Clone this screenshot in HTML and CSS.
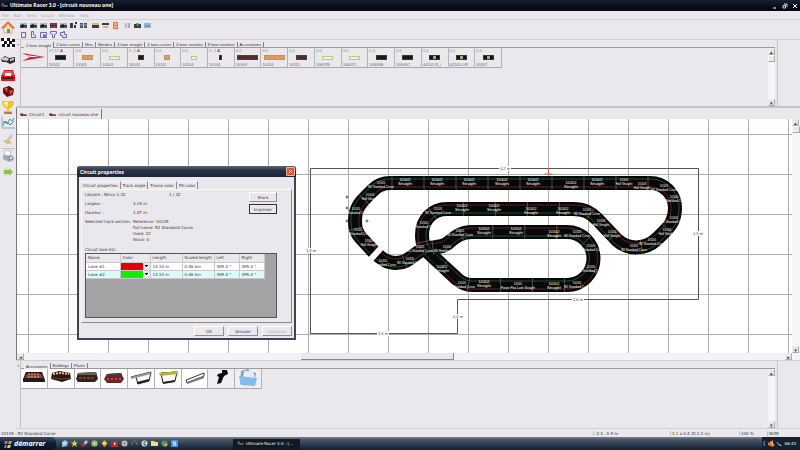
FILE: index.html
```html
<!DOCTYPE html>
<html lang="en">
<head>
<meta charset="utf-8">
<title>Ultimate Racer 3.0 - [circuit nouveau one]</title>
<link rel="stylesheet" href="styles.css">
<script src="track.js" defer></script>
</head>
<body>
<svg class="defs" aria-hidden="true">
  <symbol id="car" viewBox="0 0 12 7"><path d="M0 2 4 1 6 3 11 3 12 6 2 6 0 4Z" fill="#444"/><path d="M1 1h4" stroke="#ddd"/><path d="M5 4h6" stroke="#c55" stroke-width="2"/></symbol>
  <symbol id="pic" viewBox="0 0 7 7"><path d="M0 1h7v5H0z" fill="#3d4856"/><path d="M0 1h7v2H0z" fill="#a9b9bf"/><path d="M1 3l2-1 2 2 1-1v2H1z" fill="#161b23"/><path d="M4 5h2" stroke="#56985e"/></symbol>
  <symbol id="folder" viewBox="0 0 20 18"><path d="M3 2 10 0 12 2 18 4 16 16 2 15Z" fill="#83a2bc"/><path d="M6 2h9l2 7H5z" fill="#e2edf5"/><path d="M1 7 19 9 17 17 3 16Z" fill="#86bce8"/></symbol>
</svg>
<header class="title"><svg class="title-car"><use href="#car"/></svg><h1>Ultimate Racer 3.0 - [circuit nouveau one]</h1>
  <button aria-label="Minimize"><svg viewBox="0 0 6 6"><path d="M1 5h3" stroke="#fff"/></svg></button>
  <button aria-label="Restore"><svg viewBox="0 0 6 6"><path d="M2 1h3v3M1 2.500h2.500v2.500H1z" fill="none" stroke="#ddd"/></svg></button>
  <button aria-label="Close"><svg viewBox="0 0 6 6"><path d="m1 1 4 4m0-4-4 4" stroke="#fff"/></svg></button>
</header>
<nav class="menu"><button>File</button><button>Edit</button><button>View</button><button>Circuit</button><button>Window</button><button>Help</button></nav>
<div class="app">
  <aside class="side">
    <button aria-label="Home"><svg viewBox="0 0 14 14"><path d="M3 7h8v6H3z" fill="#f5ead8" stroke="#c9b49a"/><path d="M0 8 7 1l7 7-2 1-5-5-5 5z" fill="#e8742a"/><path d="M6 9h3v4H6z" fill="#b57436"/></svg></button>
    <button aria-label="Race"><svg viewBox="0 0 14 14"><path d="M0 2q4-2 7 0t6 1l1 8q-4 2-7 0t-6 0z" fill="#fff"/><path d="M0 2h3v3H0zM6 2h3v3H6zM11 3h3v3h-3zM3 5h3v3H3zM8 5h3v3H8zM1 8h3v3H1zM6 8h3v3H6zM11 8h3v3h-3z" fill="#161616"/></svg></button>
    <button aria-label="Cars"><svg viewBox="0 0 14 14"><path d="m0 7 4-3 4 2 6-1v5l-5 2-4-2H1z" fill="#303030"/><path d="m1 6 4-1 3 2-2 2-5-1zM9 7l4-1v2l-4 1z" fill="#ccc"/></svg></button>
    <button aria-label="Phone"><svg viewBox="0 0 14 14"><path d="m3 2 9 0 2 6v5H0V8z" fill="#d41c23"/><path d="m3 3 8 0 2 4H1z" fill="#ef5b5b"/><path d="M4 5h6v3H4z" fill="#fff"/><path d="M1 10h12" stroke="#651016" stroke-width="2"/></svg></button>
    <button aria-label="Drivers"><svg viewBox="0 0 14 14"><path d="m2 4 6-2 5 3-1 6-6 2-4-4z" fill="#79120f"/><path d="m3 4 4 0-1 4zM8 7l4-1-2 5z" fill="#f0442e"/><path d="m7 2 4 2-3 2zM4 10l3-1 0 3z" fill="#222"/></svg></button>
    <button aria-label="Trophies"><svg viewBox="0 0 14 14"><path d="M1 1h12q0 6-5 8v2h3v3H3v-3h3V9Q1 7 1 1" fill="#efc526"/><path d="M3 2h4v5Q3 6 3 2" fill="#fff19b"/><path d="M3 12h8v2H3z" fill="#ae8439"/></svg></button>
    <button aria-label="Statistics"><svg viewBox="0 0 14 14"><path d="M1 1v11h13" fill="none" stroke="#7dafc5"/><path d="m2 10 2-5 2 3 3-5 2 2 2-3M2 6l4 0 3 3 4-4" fill="none" stroke="#3b91a9"/></svg></button>
    <button aria-label="Tools"><svg viewBox="0 0 14 14"><path d="m2 9 5-2 4 4-5 1z" fill="#d7c067"/><path d="m5 9 5-7 2 2-5 6z" fill="#c9c4b3"/></svg></button>
    <button class="split" aria-label="Print"><svg viewBox="0 0 14 14"><path d="m4 1 6 1-1 5-6-1z" fill="#fff" stroke="#b6bec7"/><path d="m2 6 9 1 2 4-5 2-6-3z" fill="#a0aab5"/><circle cx="10" cy="9" r="2" fill="#dde6ed" stroke="#738191"/></svg></button>
    <button aria-label="Exit"><svg viewBox="0 0 14 14"><path d="M2 3h5v8H2z" fill="#dbe6c4"/><path d="M3 5h5V3l4 4-4 4V9H3z" fill="#8dc63e"/></svg></button>
  </aside>
  <main class="work">
    <div class="tools">
      <button aria-label="New"><svg><use href="#pic"/></svg></button><button aria-label="Open"><svg><use href="#pic"/></svg></button><button aria-label="Save"><svg><use href="#pic"/></svg></button>
      <button aria-label="Delete"><svg viewBox="0 0 7 7"><path d="M0 1h7v5H0z" fill="#48303a"/><path d="M1 2h5M1 5h5" stroke="#df3940"/></svg></button>
      <button aria-label="Copy"><svg><use href="#pic"/></svg></button><button aria-label="Align"><svg viewBox="0 0 7 7"><path d="M0 1h3v5H0zM4 3h2v3H4zM5 0h2v2H5z" fill="#343c48"/></svg></button><button aria-label="Distribute"><svg viewBox="0 0 7 7"><path d="M0 1h3v5H0zM4 1h3v5H4z" fill="#465060"/><path d="M0 3h7" stroke="#9eaebb"/></svg></button>
      <button class="gap" aria-label="Layer"><svg viewBox="0 0 7 7"><path d="M0 1h7v2H0z" fill="#dfba68"/><path d="M0 3h7v3H0z" fill="#393e3d"/></svg></button><button aria-label="Bring forward"><svg viewBox="0 0 7 7"><path d="M0 1h7v2H0z" fill="#393e3d"/><path d="M1 4h5v2H1z" fill="#e5ae65"/></svg></button><button aria-label="Selection"><svg viewBox="0 0 7 7"><path d="M1 0h5v7H1z" fill="#e37651"/><path d="M2 2h3M2 5h3" stroke="#fff2d9"/></svg></button>
      <button class="gap" aria-label="Properties"><svg viewBox="0 0 7 7"><path d="M1 1h5v5H1z" fill="#a3b1b4"/><path d="M3 1v5" stroke="#fff"/></svg></button><button aria-label="Photo"><svg viewBox="0 0 7 7"><path d="M0 2h7v4H0z" fill="#2d4937"/><path d="M2 1h3l-1 4z" fill="#62a168"/></svg></button><button aria-label="Preview"><svg viewBox="0 0 7 7"><path d="M0 1h7v5H0z" fill="#8cb8e4"/><path d="M1 4h5" stroke="#4f77a8"/></svg></button>
    </div>
    <div class="tools outline">
      <button aria-label="Rectangle"><svg viewBox="0 0 7 7"><path d="M1.500 1.500h4v5h-4z"/></svg></button><button aria-label="L room"><svg viewBox="0 0 7 7"><path d="M1.500.5h2v3l2 1v2h-4z"/></svg></button><button aria-label="U room"><svg viewBox="0 0 7 7"><path d="M.5 1.500h6v3h-2v-1h-1v2h3v1h-6z"/></svg></button><button aria-label="T room"><svg viewBox="0 0 7 7"><path d="M.5.5h6v2l-2 1v3h-2v-3l-2-1z"/></svg></button><button aria-label="Free room"><svg viewBox="0 0 7 7"><path d="M.5 1.500h3v-1h1v3h2v3h-4v-2h-2z"/></svg></button>
    </div>
    <section class="tray">
      <span class="grip">×</span>
      <div class="tray-main">
        <div class="tabs"><button class="on">2 lane straight</button><button>2 lane curves</button><button>Misc</button><button>Borders</button><button>4 lane straight</button><button>4 lane curves</button><button>6 lane sections</button><button>8 lane sections</button><button>Accessories</button></div>
        <div class="tray-body">
          <div class="parts">
            <button aria-label="Straight"><svg viewBox="0 0 24 10"><path d="M0 1 23 5 0 9 8 5z" fill="#cc2433"/><path d="m3 3 15 2H9z" fill="#fff"/></svg></button>
            <button><small>17-17 <b>A</b></small><i class="s w10"></i><span>10102</span></button>
            <button><small>0-0</small><i class="s w10 tan"></i><span>10103</span></button>
            <button><small>0-0</small><i class="s w10 pale"></i><span>10101</span></button>
            <button><small>5--5 <b>A</b></small><i class="s w5"></i><span>10103</span></button>
            <button><small>0-0</small><i class="s w5 tan"></i><span>10111</span></button>
            <button><small>0-0</small><i class="s w5 pale"></i><span>10104</span></button>
            <button><small>2--2 <b>A</b></small><i class="s w3"></i><span>10104</span></button>
            <button><small>0-0</small><i class="s w20 lanes"></i><span>10109</span></button>
            <button><small>0-0</small><i class="s w20 tan"></i><span>10114</span></button>
            <button><small>0-0</small><i class="s w10 lanes"></i><span>10111</span></button>
            <button><small>0-0</small><i class="s w10 pale"></i><span>10607B</span></button>
            <button><small>0-0</small><i class="s w10 pale"></i><span>10607C</span></button>
            <button><small>0-0</small><i class="s w10"></i><span>10606B</span></button>
            <button><small>0-0</small><i class="s w10"></i><span>10606C</span></button>
            <button><small>0-0</small><i class="s w10 mark"></i><span>40201-R_/</span></button>
            <button><small>0-0</small><i class="s w10 mark"></i><span>40201-L/R</span></button>
            <button><small>0-0</small><i class="s w10 mark"></i><span>40207</span></button>
          </div>
          <div class="vscroll"><button aria-label="Up">▴</button><div class="thumb"></div><button aria-label="Down">▾</button></div>
        </div>
      </div>
    </section>
    <div class="docs"><button><svg><use href="#car"/></svg>Circuit1</button><button class="on"><svg><use href="#car"/></svg>circuit nouveau one</button></div>
    <section class="canvas">
      <svg class="plan" role="img" aria-label="Circuit plan">
        <defs><pattern id="grid" x="11" y="15" width="40" height="40" patternUnits="userSpaceOnUse"><path d="M.5 0v40M0 .5h40" stroke="#adadad"/></pattern></defs>
        <rect width="100%" height="100%" fill="url(#grid)"/>
        <g id="plan" transform="translate(-17 -119)">
          <path d="M310.500 168.500h388v131h-241v34h-147z" fill="none" stroke="#555"/>
          <path id="road" class="road" d="M390 183H650C664 183 675 194 675 208C675 220 670 226 664 232L657 239C645 250 628 250 617 240L597 219C590 212 584 209 573 209H447C432 209 422 220 422 235C422 245 425 249 430 254L457 279Q464 285 472 285H567A26.500 26.500 0 0 0 567 232H472C460 232 454 238 448 243C441 249 430 246 422 250C412 255 408 263 396 263C387 263 382 259 374 252L362 239C355 232 355 226 355 220C355 209 360 203 366 197L373 190Q380 183 390 183"/>
          <path id="green" class="lane green"/><path id="red" class="lane red"/>
          <path id="gap" d="m371 259 10-11" stroke="#fff" stroke-width="6"/>
          <path d="M548.500 168v7m-4-1h8" stroke="#c66"/>
          <g fill="#fff" stroke="#555"><circle cx="347" cy="197" r="1"/><circle cx="347" cy="208" r="1"/><circle cx="347" cy="221" r="1"/><circle cx="367" cy="221" r="1"/></g>
          <g id="sizes" class="sizes"></g><g id="labels" class="labels"></g>
        </g>
      </svg>
      <div class="vscroll big"><button aria-label="Scroll up">▴</button><div class="thumb"></div><button aria-label="Scroll down">▾</button></div>
      <div class="hscroll"><button aria-label="Scroll left">◂</button><div class="thumb"></div><button aria-label="Scroll right">▸</button></div>
      <form class="dialog" role="dialog" aria-label="Circuit properties">
        <header><h2>Circuit properties</h2><button type="button" aria-label="Close dialog"><svg viewBox="0 0 8 8"><path d="m2 2 4 4m0-4-4 4" stroke="#fff" stroke-width="1"/></svg></button></header>
        <div class="dtabs"><button type="button" class="on">Circuit properties</button><button type="button">Track angle</button><button type="button">Frame color</button><button type="button">Fill color</button></div>
        <div class="panel">
          <div class="info">
            <dl><dt>Libraire : Ninco 1:32</dt><dd class="ratio">1 / 32</dd><dt>Largeur :</dt><dd>4.19 m</dd><dt>Hauteur :</dt><dd>1.47 m</dd><dt>Selected track section:</dt><dd class="track">Reference: 10105<br>Full name: R2 Standard Curve<br>Used: 22<br>Stock: 0</dd></dl>
            <div class="acts"><button type="button">Stock</button><button type="button" class="focus">Imprimer</button></div>
          </div>
          <p>Circuit lane list:</p>
          <div class="list"><table>
            <colgroup><col class="c1"><col class="c2"><col class="c3"><col class="c3"><col class="c4"><col class="c4"></colgroup>
            <thead><tr><th>Name</th><th>Color</th><th>Length</th><th>Scaled length</th><th>Left</th><th>Right</th></tr></thead>
            <tbody><tr><td>Lane #1</td><td class="pick"><select class="r" aria-label="Lane 1 color"><option>Red</option></select></td><td>14.34 m</td><td>0.46 km</td><td>495.0 °</td><td>495.0 °</td></tr>
            <tr><td>Lane #2</td><td class="pick"><select class="g" aria-label="Lane 2 color"><option>Green</option></select></td><td>14.34 m</td><td>0.46 km</td><td>495.0 °</td><td>495.0 °</td></tr></tbody>
          </table></div>
        </div>
        <footer><button type="button">OK</button><button type="button">Annuler</button><button type="button" disabled>Appliquer</button></footer>
      </form>
    </section>
    <section class="tray low">
      <span class="grip">×</span>
      <div class="tray-main">
        <div class="tabs"><button class="on">Accessories</button><button>Buildings</button><button>Plants</button></div>
        <div class="tray-body">
          <div class="parts white">
            <button aria-label="Stand"><svg viewBox="0 0 24 18"><path d="m4 3 16 0 3 8v2H1v-3z" fill="#251a18"/><path d="m5 5 14 0 2 4H3z" fill="#8e4038"/><path d="M6 5h12M6 8h12" stroke="#e4b19b" stroke-dasharray="2 1"/></svg></button>
            <button aria-label="Grandstand"><svg viewBox="0 0 24 18"><path d="m3 4 7-2 11 2 1 6-9 3-11-3z" fill="#2b1712"/><path d="m4 5 7-1 9 1" fill="none" stroke="#e6bda0" stroke-width="2" stroke-dasharray="2 1"/><path d="m3 9 10 1 8-1" fill="none" stroke="#733d2c"/></svg></button>
            <button aria-label="Pit building"><svg viewBox="0 0 24 18"><path d="m3 4 18-1 2 7-3 3H3l-2-3z" fill="#34221f"/><path d="m3 4 18-1 1 3H2z" fill="#66625b"/><path d="M4 9h16" stroke="#7e3830" stroke-width="2" stroke-dasharray="3 1"/></svg></button>
            <button aria-label="Pit stand"><svg viewBox="0 0 24 18"><path d="m5 5 14-1 3 6-3 4H5l-3-4z" fill="#6f242a"/><path d="m5 5 14-1 1 2H4z" fill="#3b4740"/><path d="M5 10h14" stroke="#d94143" stroke-width="2" stroke-dasharray="2 2"/></svg></button>
            <button aria-label="Bridge"><svg viewBox="0 0 24 18"><path d="M2 8 22 3l-2 9-11 3-2-7" fill="none" stroke="#222" stroke-width="1"/><path d="m8 14 12-3" stroke="#222" stroke-width="2"/><path d="m2 9 20-5" stroke="#999" stroke-width="2"/></svg></button>
            <button aria-label="Yellow bridge"><svg viewBox="0 0 24 18"><path d="m5 4 16-1-2 9-12 2z" fill="none" stroke="#222" stroke-width="1"/><path d="m7 14 12-2" stroke="#222" stroke-width="2"/><path d="m3 4 19-2v3L4 7z" fill="#b9b437"/></svg></button>
            <button aria-label="Barrier"><svg viewBox="0 0 24 18"><path d="m3 11 18-7v3L4 14z" fill="none" stroke="#333"/><path d="m4 14 17-6" stroke="#777" stroke-width="2"/></svg></button>
            <button class="plain" aria-label="Controller"><svg viewBox="0 0 24 18"><path d="m13 1 5 0 1 4-4 2-3 7-4 1 2-7-2-1 1-2 4-1z" fill="#090909"/></svg></button>
            <button class="plain" aria-label="Folder"><svg><use href="#folder"/></svg></button>
          </div>
          <div class="vscroll"><button aria-label="Tray up">▴</button><div class="thumb none"></div><button aria-label="Tray down">▾</button></div>
        </div>
      </div>
    </section>
  </main>
</div>
<div class="status"><span class="grow">10105 - R2 Standard Curve</span><span class="pos">-2.4 , 0.5 m</span><span class="dim">1.1 x 0.4 (D:1.2 m)</span><span class="pct">100 %</span><span class="num">NUM</span></div>
<footer class="taskbar">
  <button class="start"><svg viewBox="0 0 8 8"><path d="m1 1 3 0-1 3-3 0z" fill="#e85b31"/><path d="m5 1 3 0-1 3-3 0z" fill="#81bb45"/><path d="m1 5 2 0-1 3-2 0z" fill="#4d91d7"/><path d="m4 5 3 0-1 3-3 0z" fill="#f2c83c"/></svg>démarrer</button>
  <div class="quick">
    <a href="#"><svg viewBox="0 0 7 7"><path d="M1 2 4 0l3 2-1 4-5 1z" fill="#8bc1e5"/><path d="M2 3h3" stroke="#fff"/></svg></a><a href="#"><svg viewBox="0 0 7 7"><path d="m3.500 0 1 2.500H7L5 4l1 3-2.500-2L1 7l1-3-2-1.500h2.500z" fill="#e4d744"/></svg></a><a href="#"><svg viewBox="0 0 7 7"><path d="m5 0 2 2-4 4-2-1z" fill="#c7c4c0"/><circle cx="2" cy="5" r="2" fill="#a4312d"/></svg></a><a href="#"><svg viewBox="0 0 7 7"><circle cx="3.500" cy="3.500" r="3" fill="#f0d956"/><path d="M2 2h3v3H2z" fill="#fff" stroke="#43a448"/></svg></a><a href="#"><svg viewBox="0 0 7 7"><path d="m3.500 0 3 3.500-3 3.500-3-3.500z" fill="#e6a639"/><path d="M2 3h3" stroke="#fff"/></svg></a><a href="#"><svg viewBox="0 0 7 7"><path d="M0 1h7v6H0z" fill="#b92c2c"/><path d="m3 2 2 2-2 1z" fill="#fff"/></svg></a><a href="#"><svg viewBox="0 0 7 7"><circle cx="3.500" cy="3.500" r="3" fill="#c8b8a8"/><circle cx="3.500" cy="3.500" r="1" fill="#487dc2"/></svg></a><a href="#"><svg viewBox="0 0 7 7"><path d="M1 5V3q2-4 5 0v2" fill="none" stroke="#777e87"/></svg></a><a href="#"><svg viewBox="0 0 7 7"><circle cx="3.500" cy="3.500" r="3" fill="#dce3e9"/><path d="M5 2H3v3h2V4" fill="none" stroke="#456"/></svg></a><a href="#"><svg viewBox="0 0 7 7"><path d="M0 1h3l1 1h3v4H0z" fill="#f0d980"/></svg></a><a href="#"><svg viewBox="0 0 7 7"><circle cx="3.500" cy="3.500" r="3" fill="#4da25a"/><path d="M1 2q3-3 5 0z" fill="#e2473b"/><path d="M4 4h3L4 7z" fill="#efc846"/><circle cx="3.500" cy="3.500" r="1" fill="#4f89df"/></svg></a><a href="#"><svg viewBox="0 0 7 7"><path d="M0 0h7v7H0z" fill="#3c91e4"/><path d="M5 2H2v1l3 1v1H2" fill="none" stroke="#e6f1fc"/></svg></a>
  </div>
  <button class="task"><svg><use href="#car"/></svg>Ultimate Racer 3.0 - [...</button>
  <div class="clock"><svg viewBox="0 0 20 7"><path d="M3 1q-3 2 0 5" fill="none" stroke="#78a9d5"/><path d="m6 3 5-3 0 7-5-2z" fill="#ed7c2e"/><path d="m10 2 2 4" stroke="#ffd2a0"/><path d="m15 2 2 3h2v1" fill="none" stroke="#bbb"/></svg>06:43</div>
</footer>
</body>
</html>
```
FILE: styles.css
```css
* { box-sizing: border-box; }
body { margin: 0; height: 100vh; min-height: 400px; display: flex; flex-direction: column; overflow: hidden; background: #ebe8ed; color: #333; font: 4px/5px "DejaVu Sans", sans-serif; }
button { font: inherit; color: inherit; border: 0; padding: 0; margin: 0; background: none; }
h1, h2, p, dl, dd { margin: 0; font-size: inherit; }
svg { display: block; flex: none; }
.defs { width: 0; height: 0; position: absolute; }
.title { display: flex; align-items: center; gap: 4px; height: 11px; padding: 0 2px 0 1px; background: linear-gradient(#171f31, #080c1a 60%, #04060f); color: #fff; }
.title h1 { flex: 1; margin-left: -2px; font: bold 5px/7px "Open Sans", sans-serif; }
.title svg { width: 6px; height: 6px; }
.title .title-car { width: 7px; height: 5px; }
.menu { display: flex; gap: 5px; height: 9px; padding: 0 2px; border-bottom: 1px solid #d2cfd5; color: #aaa7ad; }
.app { flex: 1; min-height: 0; display: flex; }
.side { width: 16px; display: flex; flex-direction: column; align-items: center; gap: 2px; }
.side svg { width: 14px; height: 14px; }
.side .split { border-top: 1px solid #c8c5ca; }
.work { flex: 1; min-width: 0; display: flex; flex-direction: column; }
.tools { display: flex; align-items: center; gap: 3px; height: 10px; padding-left: 4px; }
.tools svg { width: 7px; height: 7px; }
.tools .gap { margin-left: 2px; }
.outline { height: 9px; }
.outline path { fill: none; stroke: #6668bd; }
.tray { display: flex; height: 69px; border-top: 1px solid #d2cfd5; border-bottom: 2px solid #c5c2c8; font-family: "Liberation Sans", sans-serif; }
.grip { width: 5px; padding: 2px 1px; border-right: 1px solid #c3c0c6; }
.tray-main { flex: 1; min-width: 0; margin-right: 22px; display: flex; flex-direction: column; border-right: 1px solid #c8c5cb; padding-right: 2px; }
.tabs { display: flex; height: 8px; padding: 2px 0 0 3px; border-bottom: 1px solid #9a979d; }
.tabs button { padding: 0 2px; border-right: 1px solid #817e84; }
.tabs .on { margin-bottom: -1px; background: #ebe8ed; }
.tray-body { flex: 1; min-height: 0; display: flex; justify-content: space-between; }
.parts { display: flex; width: 481px; height: 20px; border-bottom: 1px solid #aaa7ad; }
.parts button { flex: 1; min-width: 0; display: flex; flex-direction: column; align-items: center; justify-content: space-between; border-right: 1px solid #b5b2b8; overflow: hidden; }
.parts button > svg { width: 24px; height: 18px; }
.parts small, .parts span { align-self: flex-start; padding-left: 1px; font-size: 4px; line-height: 5px; color: #666; white-space: nowrap; }
.parts small { color: #779064; }
.parts b { color: #d4272f; font-style: italic; }
.s { height: 5px; background: #151a17; border: 1px solid #343b33; }
.w20 { width: 21px; }
.w10 { width: 11px; }
.w5 { width: 6px; }
.w3 { width: 3px; }
.s.tan { background: #e39a59; border-color: #b49a59; }
.s.pale { height: 4px; background: #eef0d8; border-color: #bfc878; }
.s.lanes { border-color: #344b3b; background: #532c29; }
.s.mark { background: linear-gradient(90deg, #111 30%, #a3a77c 30% 70%, #111 70%); }
.parts.white { width: 241px; }
.white button { background: #fff; }
.white .plain { background: #f0eef2; }
.vscroll { width: 7px; display: flex; flex-direction: column; background: #f5f4f6; }
.vscroll button, .hscroll button { width: 7px; height: 7px; line-height: 6px; font-size: 5px; border: 1px solid #aaa7ad; border-top-color: #eee; border-left-color: #eee; background: #e8e5ea; }
.vscroll .thumb { height: 7px; margin-bottom: auto; background: #ebe8ed; border: 1px solid #aaa7ad; border-top-color: #fff; border-left-color: #fff; }
.vscroll .none { visibility: hidden; }
.docs { display: flex; height: 11px; padding: 1px 3px 0; border-left: 1px solid #777; }
.docs button { display: flex; align-items: center; gap: 2px; padding: 0 3px 0 0; }
.docs svg { width: 7px; height: 5px; }
.docs .on { border-right: 1px solid #777; padding-left: 2px; }
.canvas { position: relative; flex: 1; min-height: 0; display: grid; grid-template: minmax(0, 1fr) 7px / minmax(0, 1fr) 8px; border-left: 1px solid #777; background: #f3f2f4; }
.plan { width: 100%; height: 100%; background: #fff; overflow: hidden; }
.big { width: 8px; }
.hscroll { display: flex; justify-content: space-between; }
.hscroll .thumb { width: 153px; margin: 0 auto 0 277px; background: #ebe8ed; border-right: 1px solid #888; border-bottom: 1px solid #888; }
.road { fill: none; stroke: #080808; stroke-width: 14px; }
.lane { fill: none; stroke-width: 1px; opacity: .7; }
.green { stroke: #267940; }
.red { stroke: #812f36; }
.joint { stroke: #8b8f8b; stroke-width: 1px; opacity: .5; }
.labels { fill: #fff; font: 4px "Liberation Sans", sans-serif; text-anchor: middle; }
.labels .fine { font-size: 3px; }
.sizes { fill: #444; font: 4px "Liberation Sans", sans-serif; text-anchor: middle; }
.sizes rect { fill: #fff; }
.dialog { position: absolute; left: 60px; top: 47px; width: 219px; display: flex; flex-direction: column; border: 2px solid #3b4557; border-top: 0; border-radius: 3px 3px 0 0; background: #ebe8ed; color: #333; }
.dialog header { display: flex; align-items: center; justify-content: space-between; height: 11px; padding: 0 1px; margin: 0 -2px; border-radius: 3px 3px 0 0; background: linear-gradient(#5c6878, #273246 40%, #1b2434); color: #fff; }
.dialog h2 { padding-left: 2px; font: bold 5px/8px "Open Sans", sans-serif; }
.dialog header button { width: 9px; height: 9px; border: 1px solid #f0b3a1; border-radius: 1px; background: #d65335; }
.dialog header svg { width: 7px; height: 7px; }
.dtabs { display: flex; height: 12px; padding: 4px 0 0 2px; }
.dtabs button { padding: 0 2px; border-right: 1px solid #8b888e; border-top: 1px solid #f7f6f8; }
.panel { margin: 0 2px; padding: 2px 14px 4px 3px; border: 1px solid #faf9fb; border-right-color: #8b888e; border-bottom-color: #8b888e; }
.info { display: flex; justify-content: space-between; }
.info dl { display: grid; grid-template-columns: 48px auto; align-content: start; row-gap: 3px; line-height: 6px; white-space: nowrap; }
.ratio { padding-left: 36px; }
.acts { width: 28px; display: flex; flex-direction: column; gap: 2px; }
.dialog .acts button, .dialog footer button { height: 10px; border: 1px solid #908d93; border-top-color: #fff; border-left-color: #fff; }
.dialog .acts .focus { border-color: #333; }
.panel p { padding-top: 4px; line-height: 6px; }
.list { height: 65px; border: 1px solid #555; background: #a3a2a5; }
table { width: 178px; table-layout: fixed; border-collapse: collapse; background: #fff; }
th, td { height: 8px; padding: 0 2px; border-right: 1px solid #c9c6cc; border-bottom: 1px solid #c9c6cc; text-align: left; font-weight: normal; line-height: 5px; white-space: nowrap; }
th { background: #ebe8ed; }
tbody tr:last-child { background: #dcfbfb; }
.c1 { width: 34px; }
.c2 { width: 30px; }
.c3 { width: 32px; }
.c4 { width: 25px; }
.pick { padding: 0; }
select { display: block; width: 100%; height: 7px; padding: 0; border: 0; border-radius: 0; appearance: none; font-size: 4px; color: transparent; background: linear-gradient(#111, #111) right 2px top 2px / 3px 1px no-repeat, linear-gradient(#111, #111) right 3px top 3px / 1px 1px no-repeat, linear-gradient(90deg, var(--lane) 22px, #e8e5ea 22px); }
.r { --lane: #e80000; }
.g { --lane: #0ef000; }
.dialog footer { display: flex; justify-content: flex-end; gap: 4px; padding: 3px 2px 2px; }
.dialog footer button { width: 30px; }
.dialog footer button:disabled { color: #b4b1b7; }
.low { border-color: #d2cfd5; border-bottom-width: 1px; }
.status { display: flex; height: 8px; align-items: center; padding: 0 13px 0 1px; white-space: nowrap; }
.grow { flex: 1; }
.status .pos { width: 77px; }
.status .dim { width: 69px; }
.status .pct { width: 28px; }
.status .num { width: 20px; }
.status span + span { border-left: 1px solid #c5c2c8; padding-left: 1px; }
.taskbar { display: flex; align-items: center; height: 13px; background: linear-gradient(#78828f, #485768 20%, #202b3c 80%, #141c2b); color: #fff; }
.start { display: flex; align-items: center; gap: 2px; width: 56px; height: 13px; padding-left: 4px; border-radius: 0 5px 5px 0; background: linear-gradient(#3c4b61, #111b30 50%, #0b1222); font: italic bold 7px/9px "Open Sans", sans-serif; }
.start svg { width: 8px; height: 8px; }
.quick { display: flex; gap: 3px; padding-left: 5px; }
.quick svg { width: 7px; height: 7px; }
.task { display: flex; align-items: center; gap: 2px; width: 67px; height: 10px; margin-left: 55px; padding-left: 4px; background: #111925; white-space: nowrap; }
.task svg { width: 7px; height: 5px; }
.clock { display: flex; align-items: center; gap: 2px; height: 13px; margin-left: auto; padding: 0 4px 0 0; background: #17202f; }
.clock svg { width: 20px; height: 7px; }
```
FILE: track.js
```js
const NS = "http://www.w3.org/2000/svg";
const road = document.getElementById("road");
const plan = document.getElementById("plan");

function offsetPoint(at, distance) {
  const total = road.getTotalLength();
  const p = road.getPointAtLength(at);
  const a = road.getPointAtLength(Math.max(0, at - 1));
  const b = road.getPointAtLength(Math.min(total, at + 1));
  const length = Math.hypot(b.x - a.x, b.y - a.y);
  return [p.x + (b.y - a.y) / length * distance, p.y - (b.x - a.x) / length * distance];
}

function lane(id, distance) {
  const points = [];
  for (let at = 0; at <= road.getTotalLength(); at += 2) points.push(offsetPoint(at, distance).join(" "));
  document.getElementById(id).setAttribute("d", "M" + points.join("L") + "Z");
}
lane("green", 4);
lane("red", -4);

for (let at = 2; at < road.getTotalLength(); at += 32) {
  const line = document.createElementNS(NS, "path");
  line.setAttribute("class", "joint");
  line.setAttribute("d", "M" + offsetPoint(at, 7).join(" ") + "L" + offsetPoint(at, -7).join(" "));
  plan.insertBefore(line, document.getElementById("gap"));
}

function write(group, x, y, words, style) {
  const text = document.createElementNS(NS, "text");
  text.setAttribute("x", x);
  text.setAttribute("y", y);
  if (style) text.setAttribute("class", style);
  text.textContent = words;
  document.getElementById(group).append(text);
}

const straights = [[405,181],[437,181],[469,181],[502,181],[533,181],[571,184],[597,181],[462,207],[494,207],[531,210],[563,210],[484,230],[516,230],[554,233],[484,283],[554,285],[442,268]];
const halves = [[370,196],[369,242],[624,181],[642,185],[667,231],[612,233],[601,222]];
const curves = [[381,184],[356,210],[358,231],[383,262],[410,260],[420,248],[447,248],[460,232],[424,224],[438,210],[664,187],[674,198],[674,219],[652,241],[634,247],[587,211],[577,233],[591,247],[591,268],[577,284],[462,284]];
const put = (list, number, name, style) => list.forEach(([x, y]) => {
  write("labels", x, y, number, style);
  write("labels", x, y + 4, name, style);
});
put(straights, "10102", "Straight");
put(halves, "10103", "Half Straight", "fine");
put(curves, "10105", "R2 Standard Curve", "fine");
put([[518, 285]], "10101", "Power Plus Lane Straight", "fine");

[[383,335,"1.6 m"],[578,301,"2.6 m"],[698,235,"1.5 m"],[458,318,"0.4 m"],[311,252,"1.8 m"],[505,170,"4.2 m"]].forEach(([x, y, words]) => {
  const back = document.createElementNS(NS, "rect");
  back.setAttribute("x", x - 6);
  back.setAttribute("y", y - 4);
  back.setAttribute("width", 12);
  back.setAttribute("height", 5);
  document.getElementById("sizes").append(back);
  write("sizes", x, y, words);
});
```
